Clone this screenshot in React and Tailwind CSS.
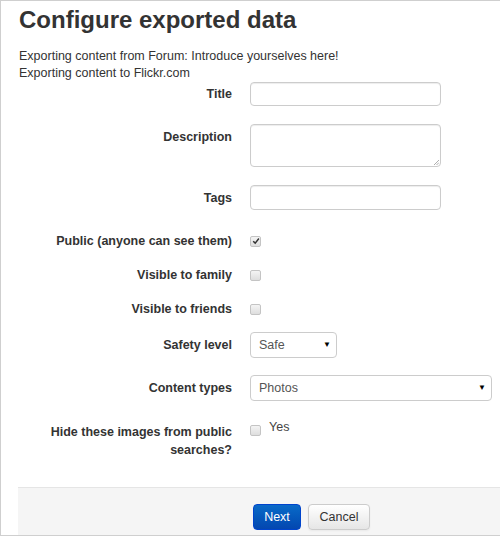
import React from "react";

const Label = ({ children, className = "" }) => (
  <div className={`w-[186px] shrink-0 text-right text-[12.5px] font-bold leading-[18px] text-[#333] ${className}`}>
    {children}
  </div>
);

// little greyed checkbox square, like the old webkit one
const Check = ({ checked = false }) => (
  <span className="flex h-[11px] w-[11px] items-center justify-center rounded-[2px] border border-[#c4c4c4] bg-gradient-to-b from-[#f4f4f4] to-[#dedede]">
    {checked && (
      <svg viewBox="0 0 10 10" className="h-[8px] w-[8px]">
        <path d="M1.5 5.2 L4 7.6 L8.6 1.8" fill="none" stroke="#333" strokeWidth="1.8" />
      </svg>
    )}
  </span>
);

const Select = ({ value, className = "" }) => (
  <div
    className={`flex h-[26px] items-center justify-between rounded-[4px] border border-[#ccc] bg-white pl-[8px] pr-[5px] text-[12.5px] text-[#555] ${className}`}
  >
    <span>{value}</span>
    <span className="text-[8px] leading-none text-black">▼</span>
  </div>
);

const inputCls =
  "h-[24px] w-[191px] rounded-[4px] border border-[#ccc] bg-white shadow-[inset_0_1px_1px_rgba(0,0,0,0.075)]";

export default function App() {
  return (
    <div className="h-[536px] w-[500px] overflow-hidden bg-white font-['Liberation_Sans',Arial,sans-serif] text-[#333]">
      <div className="flex h-full flex-col border-y border-l border-[#cfcfcf] pl-[17px]">
        <h2 className="ml-px mt-[4px] text-[24px] font-bold leading-[30px] text-[#333]">
          Configure exported data
        </h2>
        <div className="ml-px mt-[13px] text-[12.5px] leading-[17px] text-[#333]">
          <p>Exporting content from Forum: Introduce yourselves here!</p>
          <p>Exporting content to Flickr.com</p>
        </div>

        <div className="flex flex-col">
          <div className="flex items-center gap-[18px] pl-[28px]">
            <Label>Title</Label>
            <div className={inputCls} />
          </div>

          <div className="mt-[18px] flex items-start gap-[18px] pl-[28px]">
            <Label className="mt-[4px]">Description</Label>
            <div className={`${inputCls} relative h-[43px]`}>
              <svg viewBox="0 0 6 6" className="absolute bottom-[1px] right-[1px] h-[6px] w-[6px]">
                <path d="M1 6 L6 1 M3.5 6 L6 3.5" stroke="#999" strokeWidth="0.8" />
              </svg>
            </div>
          </div>

          <div className="mt-[18px] flex items-center gap-[18px] pl-[28px]">
            <Label>Tags</Label>
            <div className={`${inputCls} h-[25px]`} />
          </div>

          <div className="mt-[22px] flex items-center gap-[18px] pl-[28px]">
            <Label>Public (anyone can see them)</Label>
            <Check checked />
          </div>

          <div className="mt-[16px] flex items-center gap-[18px] pl-[28px]">
            <Label>Visible to family</Label>
            <Check />
          </div>

          <div className="mt-[16px] flex items-center gap-[18px] pl-[28px]">
            <Label>Visible to friends</Label>
            <Check />
          </div>

          <div className="mt-[14px] flex items-center gap-[18px] pl-[28px]">
            <Label>Safety level</Label>
            <Select value="Safe" className="w-[87px]" />
          </div>

          <div className="mt-[17px] flex items-center gap-[18px] pl-[28px]">
            <Label>Content types</Label>
            <Select value="Photos" className="w-[242px]" />
          </div>

          <div className="mt-[22px] flex items-start gap-[18px] pl-[28px]">
            <Label>Hide these images from public searches?</Label>
            <div className="flex items-center gap-[8px]">
              <span className="mt-[1px]">
                <Check />
              </span>
              <span className="-mt-[5px] text-[12.5px] leading-[18px] text-[#444]">Yes</span>
            </div>
          </div>
        </div>

        <div className="mt-auto flex h-[48px] items-end justify-start border-t border-[#e5e5e5] bg-[#f5f5f5] pb-[5px] pl-[235px]">
          <div className="flex gap-[7px]">
            <button className="h-[26px] w-[48px] rounded-[4px] border border-[#04c] bg-gradient-to-b from-[#0a6ac8] to-[#0447b0] text-[12.5px] text-white">
              Next
            </button>
            <button className="h-[26px] w-[62px] rounded-[4px] border border-[#ccc] bg-gradient-to-b from-white to-[#e6e6e6] text-[12.5px] text-[#333] shadow-[0_1px_2px_rgba(0,0,0,0.05)]">
              Cancel
            </button>
          </div>
        </div>
      </div>
    </div>
  );
}
